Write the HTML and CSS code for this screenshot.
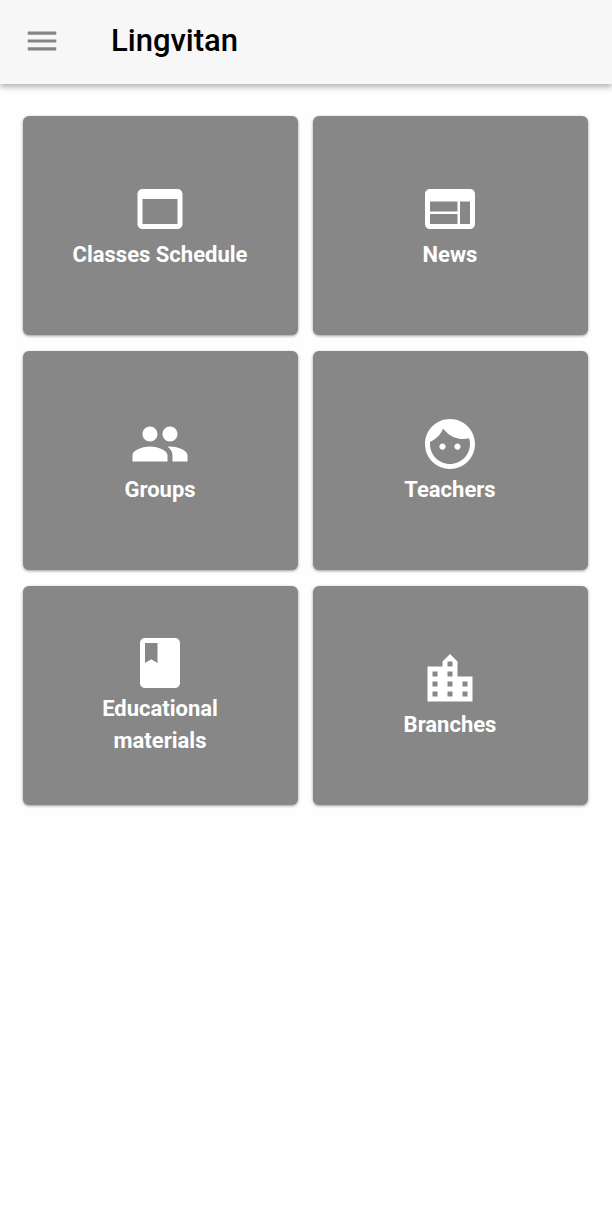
FILE: index.html
```html
<!DOCTYPE html>
<html lang="en">
<head>
<meta charset="utf-8">
<meta name="viewport" content="width=device-width, initial-scale=1">
<title>Lingvitan</title>
<link rel="stylesheet" href="styles.css">
</head>
<body>
<header class="app-bar">
  <button class="menu-button" type="button" aria-label="Menu">
    <svg class="menu-icon" viewBox="0 0 24 24" aria-hidden="true"><path d="M3 18h18v-2H3v2zm0-5h18v-2H3v2zm0-7v2h18V6H3z"/></svg>
  </button>
  <h1 class="title">Lingvitan</h1>
</header>
<main class="tiles">
  <button class="tile" type="button">
    <svg class="tile-icon" viewBox="0 0 24 24" aria-hidden="true"><path d="M19 4H5c-1.11 0-2 .9-2 2v12c0 1.1.89 2 2 2h14c1.1 0 2-.9 2-2V6c0-1.1-.89-2-2-2zm0 14H5V8h14v10z"/></svg>
    <span class="tile-label">Classes Schedule</span>
  </button>
  <button class="tile" type="button">
    <svg class="tile-icon" viewBox="0 0 24 24" aria-hidden="true"><path d="M20 4H4c-1.1 0-1.99.9-1.99 2L2 18c0 1.1.9 2 2 2h16c1.1 0 2-.9 2-2V6c0-1.1-.9-2-2-2zm-5 14H4v-4h11v4zm0-5H4V9h11v4zm5 5h-4V9h4v9z"/></svg>
    <span class="tile-label">News</span>
  </button>
  <button class="tile" type="button">
    <svg class="tile-icon" viewBox="0 0 24 24" aria-hidden="true"><path d="M16 11c1.66 0 2.99-1.34 2.99-3S17.66 5 16 5c-1.66 0-3 1.34-3 3s1.34 3 3 3zm-8 0c1.66 0 2.99-1.34 2.99-3S9.66 5 8 5C6.34 5 5 6.34 5 8s1.34 3 3 3zm0 2c-2.33 0-7 1.17-7 3.5V19h14v-2.5c0-2.33-4.67-3.5-7-3.5zm8 0c-.29 0-.62.02-.97.05 1.16.84 1.97 1.97 1.97 3.45V19h6v-2.5c0-2.33-4.67-3.5-7-3.5z"/></svg>
    <span class="tile-label">Groups</span>
  </button>
  <button class="tile" type="button">
    <svg class="tile-icon" viewBox="0 0 24 24" aria-hidden="true"><path d="M9 11.75c-.69 0-1.25.56-1.25 1.25s.56 1.25 1.25 1.25 1.25-.56 1.25-1.25-.56-1.25-1.25-1.25zm6 0c-.69 0-1.25.56-1.25 1.25s.56 1.25 1.25 1.25 1.25-.56 1.25-1.25-.56-1.25-1.25-1.25zM12 2C6.48 2 2 6.48 2 12s4.48 10 10 10 10-4.48 10-10S17.52 2 12 2zm0 18c-4.41 0-8-3.59-8-8 0-.29.02-.58.05-.86 2.36-1.05 4.23-2.98 5.21-5.37C11.07 8.33 14.05 10 17.42 10c.78 0 1.53-.09 2.25-.26.21.71.33 1.47.33 2.26 0 4.41-3.59 8-8 8z"/></svg>
    <span class="tile-label">Teachers</span>
  </button>
  <button class="tile" type="button">
    <svg class="tile-icon" viewBox="0 0 24 24" aria-hidden="true"><path d="M18 2H6c-1.1 0-2 .9-2 2v16c0 1.1.9 2 2 2h12c1.1 0 2-.9 2-2V4c0-1.1-.9-2-2-2zM6 4h5v8l-2.5-1.5L6 12V4z"/></svg>
    <span class="tile-label">Educational<br>materials</span>
  </button>
  <button class="tile" type="button">
    <svg class="tile-icon" viewBox="0 0 24 24" aria-hidden="true"><path d="M15 11V5l-3-3-3 3v2H3v14h18V11h-6zm-8 8H5v-2h2v2zm0-4H5v-2h2v2zm0-4H5V9h2v2zm6 8h-2v-2h2v2zm0-4h-2v-2h2v2zm0-4h-2V9h2v2zm0-4h-2V5h2v2zm6 12h-2v-2h2v2zm0-4h-2v-2h2v2z"/></svg>
    <span class="tile-label">Branches</span>
  </button>
</main>
</body>
</html>
```
FILE: styles.css
```css
* {
  box-sizing: border-box;
}

body {
  margin: 0;
  background: #fefefe;
  font-family: Roboto, "Liberation Sans", sans-serif;
}

.app-bar {
  display: flex;
  align-items: center;
  gap: 50px;
  padding: 21px 23px 23px;
  background: #f7f7f7;
  box-shadow: 0 3px 6px rgba(0, 0, 0, 0.3);
}

.menu-button {
  display: flex;
  padding: 0;
  border: 0;
  background: none;
}

.menu-icon {
  width: 38px;
  height: 38px;
  fill: #858585;
}

.title {
  margin: 0;
  color: #000;
  font-size: 31px;
  font-weight: 500;
  line-height: 40px;
}

.tiles {
  display: grid;
  grid-template-columns: 1fr 1fr;
  gap: 16px 15px;
  padding: 32px 24px 32px 23px;
}

.tile {
  display: flex;
  flex-direction: column;
  align-items: center;
  justify-content: center;
  aspect-ratio: 275 / 219;
  padding: 0 1px 1px 0;
  border: 0;
  border-radius: 6px;
  background: #878787;
  box-shadow: 0 1px 3px rgba(0, 0, 0, 0.4);
  color: #fff;
  font-family: inherit;
}

.tile-icon {
  width: 60px;
  height: 60px;
  fill: currentColor;
}

.tile-label {
  font-size: 22px;
  font-weight: 700;
  line-height: 32px;
  text-align: center;
}
```
